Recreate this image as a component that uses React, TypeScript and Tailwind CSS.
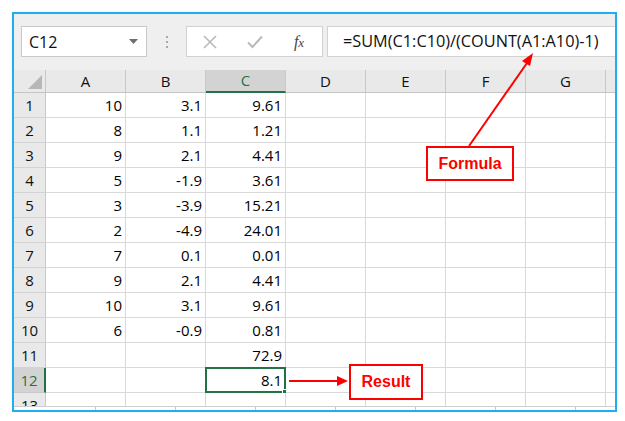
import React from 'react';

const colA = ['10', '8', '9', '5', '3', '2', '7', '9', '10', '6'];
const colB = ['3.1', '1.1', '2.1', '-1.9', '-3.9', '-4.9', '0.1', '2.1', '3.1', '-0.9'];
const colC = ['9.61', '1.21', '4.41', '3.61', '15.21', '24.01', '0.01', '4.41', '9.61', '0.81', '72.9', '8.1'];
const letters = ['A', 'B', 'C', 'D', 'E', 'F', 'G'];

const font = { fontFamily: '"Open Sans", "Noto Sans", sans-serif' };

function HeaderRow() {
  return (
    <div className="flex h-[23px] border-b border-[#c4c4c4] bg-[#e9e9e9]">
      <div className="w-[32px] shrink-0 border-r border-[#c8c8c8] relative">
        <svg className="absolute right-[3px] bottom-[3px]" width="14" height="14" viewBox="0 0 14 14">
          <polygon points="14,0 14,14 0,14" fill="#b7b7b7" />
        </svg>
      </div>
      {letters.map(l => (
        <div
          key={l}
          className={
            l === 'C'
              ? 'w-[80px] shrink-0 border-r border-[#c8c8c8] bg-[#d3d3d3] text-[#217346] flex items-center justify-center text-[15px] border-b-2 border-b-[#217346] -mb-px'
              : 'w-[80px] shrink-0 border-r border-[#c8c8c8] text-[#111] flex items-center justify-center text-[15px]'
          }
        >
          {l}
        </div>
      ))}
      <div className="flex-1" />
    </div>
  );
}

function DataRow({ n }: { n: number }) {
  const cells = [colA[n - 1] ?? '', colB[n - 1] ?? '', colC[n - 1] ?? '', '', '', '', ''];
  const active = n === 12;
  return (
    <div className="flex h-[25px] shrink-0">
      <div
        className={
          active
            ? 'w-[32px] shrink-0 bg-[#d3d3d3] text-[#217346] border-r-2 border-[#217346] border-b border-b-[#c8c8c8] flex items-center justify-center text-[15px]'
            : 'w-[32px] shrink-0 bg-[#e9e9e9] text-[#111] border-r border-[#c8c8c8] border-b border-b-[#d4d4d4] flex items-center justify-center text-[15px]'
        }
      >
        {n}
      </div>
      {cells.map((v, i) => (
        <div
          key={i}
          className="w-[80px] shrink-0 border-r border-b border-[#d9d9d9] bg-white relative flex items-end justify-end pr-[3px] pb-[1px] text-[15px] text-black"
        >
          {v}
          {active && i === 2 && (
            <>
              <div className="absolute -left-px -top-px -right-px -bottom-px border-2 border-[#217346]" />
              <div className="absolute -right-[4px] -bottom-[4px] w-[7px] h-[7px] bg-[#217346] border border-white" />
            </>
          )}
        </div>
      ))}
      <div className="flex-1 border-b border-[#d9d9d9] bg-white" />
    </div>
  );
}

export default function App() {
  return (
    <div className="w-[625px] h-[421px] bg-white relative overflow-hidden" style={font}>
      <div className="absolute left-[12px] top-[12px] w-[605px] h-[400px] border-2 border-[#1cb0ef] bg-[#efefef] flex flex-col">
        {/* formula bar */}
        <div className="h-[56px] shrink-0 flex items-start pt-[12px] pl-[7px]">
          <div className="w-[126px] h-[31px] bg-white border border-[#c9c9c9] flex items-center justify-between pl-[7px] pr-[8px]">
            <span className="text-[16px] text-[#111]">C12</span>
            <svg width="9" height="5" viewBox="0 0 9 5">
              <polygon points="0,0 9,0 4.5,5" fill="#6f6f6f" />
            </svg>
          </div>
          <div className="w-[39px] h-[31px] flex flex-col items-center justify-center gap-[3px]">
            <span className="w-[2px] h-[2px] bg-[#a8a8a8]" />
            <span className="w-[2px] h-[2px] bg-[#a8a8a8]" />
            <span className="w-[2px] h-[2px] bg-[#a8a8a8]" />
          </div>
          <div className="w-[137px] h-[31px] bg-white border border-[#d2d2d2] flex items-center">
            <div className="w-[46px] flex justify-center">
              <svg width="14" height="14" viewBox="0 0 14 14">
                <path d="M1 1 L13 13 M13 1 L1 13" stroke="#b9b9b9" strokeWidth="1.6" />
              </svg>
            </div>
            <div className="w-[44px] flex justify-center">
              <svg width="16" height="14" viewBox="0 0 16 14">
                <path d="M1 7.5 L5.5 12 L15 1.5" stroke="#b9b9b9" strokeWidth="2" fill="none" />
              </svg>
            </div>
            <div className="w-[44px] flex justify-center">
              <span className="italic text-[16px] text-[#444]" style={{ fontFamily: '"Liberation Serif", serif' }}>
                f<span className="text-[13px]">x</span>
              </span>
            </div>
          </div>
          <div className="ml-[4px] flex-1 h-[31px] bg-white border border-r-0 border-[#d2d2d2] flex items-center pl-[15px] text-[16.3px] text-[#111]">
            =SUM(C1:C10)/(COUNT(A1:A10)-1)
          </div>
        </div>

        {/* grid */}
        <div className="flex-1 flex flex-col overflow-hidden bg-white">
          <HeaderRow />
          {Array.from({ length: 13 }, (_, i) => (
            <DataRow key={i} n={i + 1} />
          ))}
        </div>
        <div className="h-[4px] shrink-0 bg-white border-t border-[#cfcfcf] relative">
          {[81, 161, 241, 321, 401, 481, 561].map(x => (
            <span key={x} className="absolute top-0 w-px h-[3px] bg-[#c8c8c8]" style={{ left: x }} />
          ))}
        </div>
      </div>

      {/* annotations */}
      <svg className="absolute inset-0 pointer-events-none" width="625" height="421">
        <line x1="469" y1="146" x2="527" y2="63" stroke="#ff0000" strokeWidth="2" />
        <polygon points="533,53 522,61 530,66" fill="#ff0000" />
        <line x1="289" y1="381" x2="338" y2="381" stroke="#ff0000" strokeWidth="2" />
        <polygon points="348,381 337,376 337,386" fill="#ff0000" />
      </svg>
      <div
        className="absolute left-[426px] top-[146px] w-[88px] h-[35px] border-2 border-[#ff0000] bg-white flex items-center justify-center text-[#ff0000] font-bold text-[16px]"
        style={{ fontFamily: '"Liberation Sans", Arial, sans-serif' }}
      >
        Formula
      </div>
      <div
        className="absolute left-[349px] top-[364px] w-[74px] h-[36px] border-2 border-[#ff0000] bg-white flex items-center justify-center text-[#ff0000] font-bold text-[16px]"
        style={{ fontFamily: '"Liberation Sans", Arial, sans-serif' }}
      >
        Result
      </div>
    </div>
  );
}
